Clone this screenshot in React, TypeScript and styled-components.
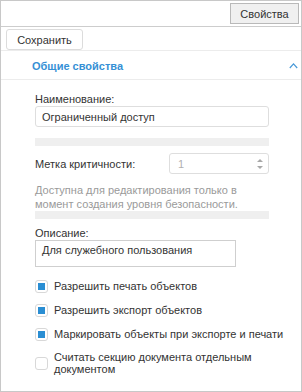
import React from "react";
import styled, { createGlobalStyle } from "styled-components";

const GlobalStyle = createGlobalStyle`
  body {
    margin: 0;
    background: #fff;
    font-family: "Liberation Sans", Arial, sans-serif;
    font-size: 11px;
    color: #333;
  }
`;

const Frame = styled.div`
  width: 302px;
  height: 392px;
  box-sizing: border-box;
  border: 1px solid #c8c8c8;
  display: flex;
  flex-direction: column;
  overflow: hidden;
`;

const Toolbar = styled.div`
  flex: none;
  height: 25px;
  display: flex;
  align-items: center;
  justify-content: flex-end;
  padding-right: 2px;
  border-bottom: 1px solid #cdcdcd;
`;

const ToolButton = styled.button`
  height: 21px;
  padding: 0;
  box-sizing: border-box;
  border: 1px solid #b9b9b9;
  background: #f0f0f0;
  font-family: inherit;
  font-size: 11px;
  color: #333;
  width: 69px;
`;

const ActionRow = styled.div`
  flex: none;
  height: 24px;
  display: flex;
  align-items: flex-start;
  padding: 2px 5px 0;
  box-sizing: border-box;
  border-bottom: 1px solid #ececec;
`;

const SaveButton = styled.button`
  height: 21px;
  width: 77px;
  box-sizing: border-box;
  border: 1px solid #dcdcdc;
  border-radius: 3px;
  background: #fff;
  font-family: inherit;
  font-size: 11px;
  color: #333;
  padding: 0;
`;

const SectionHeader = styled.div`
  flex: none;
  height: 28px;
  display: flex;
  align-items: center;
  justify-content: space-between;
  padding: 0 3px 0 31px;
  border-bottom: 1px solid #ececec;
`;

const SectionTitle = styled.span`
  font-weight: bold;
  color: #3590d5;
  font-size: 11px;
  padding-top: 1px;
`;

const Content = styled.div`
  flex: none;
  padding: 12px 32px 0 34px;
  display: flex;
  flex-direction: column;
`;

const Label = styled.div`
  line-height: 14px;
`;

const TextInput = styled.div`
  height: 21px;
  box-sizing: border-box;
  border: 1px solid #dedede;
  border-radius: 3px;
  padding: 0 6px;
  display: flex;
  align-items: center;
  color: #333;
`;

const Divider = styled.div<{ $top: number }>`
  flex: none;
  height: 8px;
  background: #efefef;
  margin-top: ${(p) => p.$top}px;
`;

const SpinRow = styled.div`
  display: flex;
  align-items: center;
  justify-content: space-between;
  margin-top: 7px;
`;

const SpinBox = styled.div`
  width: 100px;
  height: 21px;
  box-sizing: border-box;
  border: 1px solid #dedede;
  border-radius: 3px;
  display: flex;
  align-items: center;
  justify-content: space-between;
  padding: 0 5px 0 8px;
  color: #b0b0b0;
`;

const Arrows = styled.div`
  display: flex;
  flex-direction: column;
  gap: 4px;
`;

const Hint = styled.div`
  color: #9a9a9a;
  line-height: 14px;
  margin-top: 9px;
  white-space: nowrap;
`;

const DescLabel = styled(Label)`
  margin-top: 7px;
`;

const TextArea = styled.div`
  width: 201px;
  height: 27px;
  box-sizing: border-box;
  border: 1px solid #cfcfcf;
  padding: 2px 6px;
  line-height: 14px;
`;

const Checks = styled.div`
  display: flex;
  flex-direction: column;
  gap: 10px;
  margin-top: 12px;
`;

const CheckRow = styled.label`
  display: flex;
  align-items: center;
  gap: 6px;
  line-height: 14px;
  white-space: nowrap;
`;

const MultiLine = styled.span`
  line-height: 12px;
`;

const Box = styled.span<{ $on: boolean }>`
  flex: none;
  width: 13px;
  height: 13px;
  box-sizing: border-box;
  border: 1px solid #d8d8d8;
  border-radius: 3px;
  background: #fff;
  display: flex;
  align-items: center;
  justify-content: center;
  &::after {
    content: "";
    width: 7px;
    height: 7px;
    background: ${(p) => (p.$on ? "#2a8ed3" : "transparent")};
  }
`;

const checks = [
  { text: "Разрешить печать объектов", on: true },
  { text: "Разрешить экспорт объектов", on: true },
  { text: "Маркировать объекты при экспорте и печати", on: true },
];

export default function App() {
  return (
    <>
      <GlobalStyle />
      <Frame>
        <Toolbar>
          <ToolButton>Свойства</ToolButton>
        </Toolbar>
        <ActionRow>
          <SaveButton>Сохранить</SaveButton>
        </ActionRow>
        <SectionHeader>
          <SectionTitle>Общие свойства</SectionTitle>
          <svg width="9" height="7" viewBox="0 0 9 7">
            <path d="M0.8 6 L4.5 1.8 L8.2 6" fill="none" stroke="#4a9ad8" strokeWidth="1.2" />
          </svg>
        </SectionHeader>
        <Content>
          <Label>Наименование:</Label>
          <TextInput>Ограниченный доступ</TextInput>
          <Divider $top={11} />
          <SpinRow>
            <span>Метка критичности:</span>
            <SpinBox>
              <span>1</span>
              <Arrows>
                <svg width="6" height="3" viewBox="0 0 6 3">
                  <path d="M0 3 L3 0 L6 3 Z" fill="#a8a8a8" />
                </svg>
                <svg width="6" height="3" viewBox="0 0 6 3">
                  <path d="M0 0 L3 3 L6 0 Z" fill="#a8a8a8" />
                </svg>
              </Arrows>
            </SpinBox>
          </SpinRow>
          <Hint>
            Доступна для редактирования только в
            <br />
            момент создания уровня безопасности.
          </Hint>
          <Divider $top={0} />
          <DescLabel>Описание:</DescLabel>
          <TextArea>Для служебного пользования</TextArea>
          <Checks>
            {checks.map((c) => (
              <CheckRow key={c.text}>
                <Box $on={c.on} />
                <span>{c.text}</span>
              </CheckRow>
            ))}
            <CheckRow>
              <Box $on={false} />
              <MultiLine>
                Считать секцию документа отдельным
                <br />
                документом
              </MultiLine>
            </CheckRow>
          </Checks>
        </Content>
      </Frame>
    </>
  );
}
